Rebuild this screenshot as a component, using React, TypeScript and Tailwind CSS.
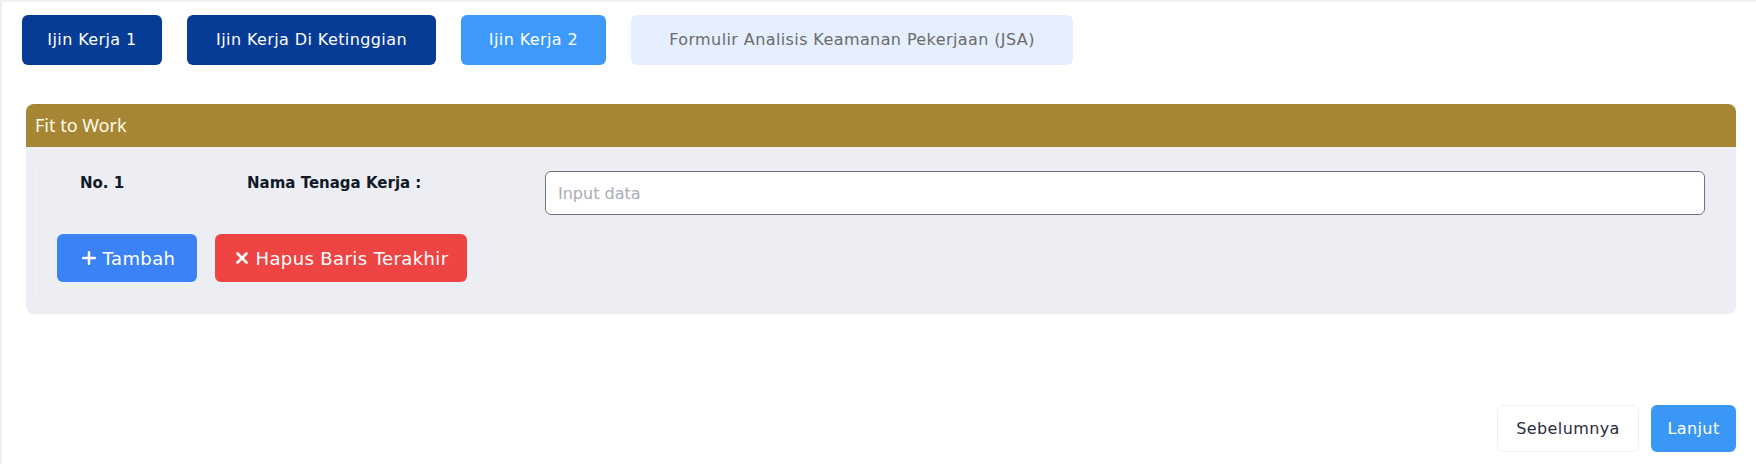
import { Plus, X } from "lucide-react";

const tabs = [
  { label: "Ijin Kerja 1", cls: "w-[140px] bg-[#063c96] text-white" },
  { label: "Ijin Kerja Di Ketinggian", cls: "w-[249px] bg-[#063c96] text-white" },
  { label: "Ijin Kerja 2", cls: "w-[145px] bg-[#3d9afb] text-white" },
  { label: "Formulir Analisis Keamanan Pekerjaan (JSA)", cls: "w-[442px] bg-[#e5efff] text-[#6b6b6b]" },
];

export default function App() {
  return (
    <div className="h-[464px] w-[1756px] overflow-hidden border-t-2 border-l-2 border-[#eef0f3] bg-white font-['DejaVu_Sans',sans-serif]">
      <div className="flex h-full flex-col px-[20px] pt-[13px] pb-[12px]">
        {/* Langkah formulir */}
        <div className="flex gap-[25px]">
          {tabs.map((tab) => (
            <button
              key={tab.label}
              className={`h-[50px] rounded-md text-[16px] tracking-[0.4px] ${tab.cls}`}
            >
              {tab.label}
            </button>
          ))}
        </div>

        {/* Kartu Fit to Work */}
        <div className="mt-[39px] ml-[4px] overflow-hidden rounded-lg bg-[#eceef3]">
          <div className="flex h-[43px] items-center bg-[#a68635] px-[9px] font-['Noto_Sans',sans-serif] text-[18px] text-[#fffbe6]">
            Fit to Work
          </div>
          <div className="m-[10px] mt-[11px] rounded-md border border-[#f1f2f6] px-[20px] pt-[12px] pb-[21px]">
            <div className="flex items-start">
              <div className="w-[111px] pt-[1px] pl-[23px] text-[15px] font-semibold text-[#111827]">No. 1</div>
              <div className="w-[377px] pt-[1px] pl-[79px] text-[15px] font-semibold text-[#111827]">
                Nama Tenaga Kerja :
              </div>
              <input
                placeholder="Input data"
                className="h-[44px] flex-1 rounded-md border border-[#6b7280] bg-white px-3 text-[16px] placeholder:text-[#a9adb6]"
              />
            </div>
            <div className="mt-[19px] flex gap-[18px]">
              <button className="flex h-[48px] w-[140px] items-center justify-center gap-1 rounded-md bg-[#3b82f6] text-[18px] tracking-[0.4px] text-white">
                <Plus size={20} strokeWidth={3} />
                Tambah
              </button>
              <button className="flex h-[48px] w-[252px] items-center justify-center gap-1 rounded-md bg-[#ef4444] text-[18px] tracking-[0.4px] text-white">
                <X size={18} strokeWidth={3.5} />
                Hapus Baris Terakhir
              </button>
            </div>
          </div>
        </div>

        {/* Navigasi */}
        <div className="mt-auto flex justify-end gap-[12px]">
          <button className="h-[47px] w-[142px] rounded-md border border-[#eef0f3] bg-white text-[16px] tracking-[0.4px] text-[#2b2b40]">
            Sebelumnya
          </button>
          <button className="h-[47px] w-[85px] rounded-md bg-[#3b97f6] text-[16px] tracking-[0.4px] text-white">
            Lanjut
          </button>
        </div>
      </div>
    </div>
  );
}
